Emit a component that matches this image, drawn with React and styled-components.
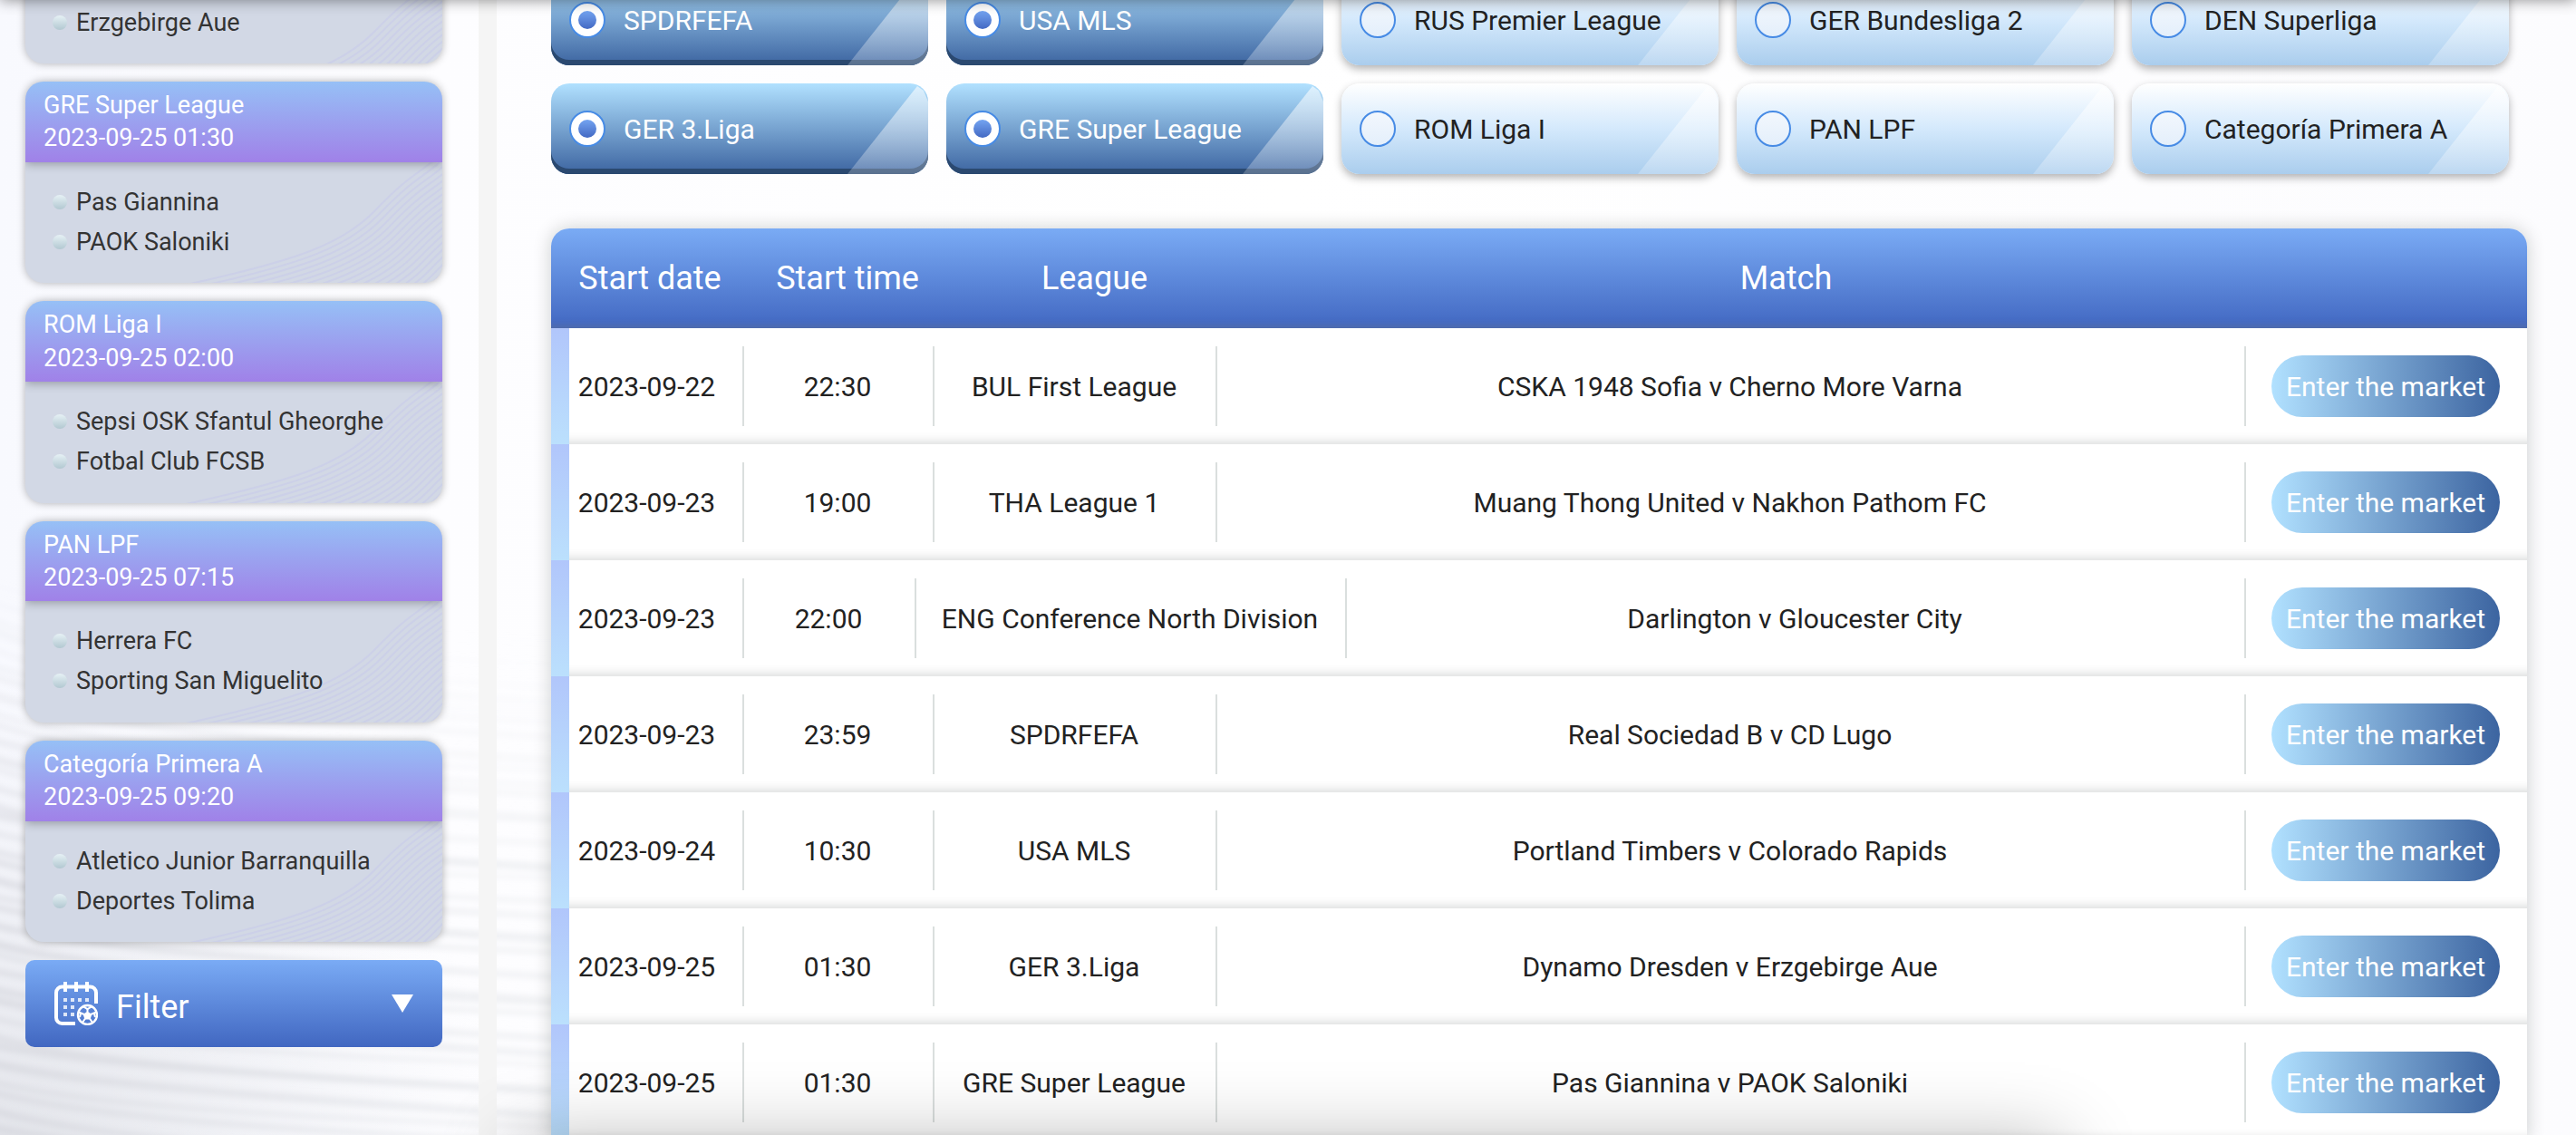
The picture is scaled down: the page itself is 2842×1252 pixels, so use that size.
import React from 'react'
import styled, { createGlobalStyle, css } from 'styled-components'

const GlobalStyle = createGlobalStyle`
  * {
    box-sizing: border-box;
  }

  body {
    margin: 0;
    font-family: Roboto, "Liberation Sans", sans-serif;
    color: #222;
    background: #fff;
    -webkit-font-smoothing: antialiased;
  }
`

const blueGradient = 'linear-gradient(180deg, #7aabf5 0%, #4167c1 100%)'

const Page = styled.div`
  position: relative;
  display: flex;
  align-items: stretch;
  height: 1252px;
  overflow: hidden;
`

const Backdrop = styled.svg`
  position: absolute;
  left: 0;
  top: 0;
  width: 2842px;
  height: 1252px;
`

const TopShade = styled.div`
  position: absolute;
  left: 0;
  right: 0;
  bottom: 100%;
  height: 40px;
  box-shadow: 0 0 16px rgba(0, 0, 0, .45);
`

const BottomShade = styled.div`
  position: absolute;
  left: 20%;
  top: calc(100% + 10px);
  width: 60%;
  height: 400px;
  box-shadow: 0 0 80px rgba(0, 0, 0, .3);
`

/* sidebar */

const Sidebar = styled.aside`
  position: relative;
  display: flex;
  flex-direction: column;
  gap: 20px;
  flex: none;
  width: 548px;
  margin-top: -19.5px;
  padding: 0 40px 0 28px;
  border-right: 20px solid #f5f5f5;
`

const Card = styled.section`
  flex: none;
  border-radius: ${props => props.continued ? '0 0 20px 20px' : '20px'};
  overflow: hidden;
  background: #d2d8e5;
  box-shadow: 0 0 10px rgba(0, 0, 0, .3);
`

const CardHeader = styled.header`
  position: relative;
  height: 88.8px;
  padding: 8px 20px;
  font-size: 27px;
  line-height: 36.4px;
  color: #fff;
  background: linear-gradient(180deg, #96c0f6 0%, #a081e8 100%);
  box-shadow: 0 2px 10px rgba(0, 0, 0, .3);
`

const CardBody = styled.div`
  display: grid;
  height: ${props => props.continued ? '89.5px' : '133.5px'};

  > * {
    grid-area: 1 / 1;
  }
`

const CardPattern = styled.svg`
  align-self: end;
  width: 460px;
  height: 134px;
`

const Teams = styled.ul`
  position: relative;
  margin: 0;
  padding: 22px 30px;
  list-style: none;
`

const Team = styled.li`
  display: flex;
  align-items: center;
  gap: 10px;
  height: 44px;
  font-size: 27px;
  line-height: 30px;
  color: #333;

  &::before {
    content: '';
    width: 16px;
    height: 16px;
    border-radius: 50%;
    background: linear-gradient(180deg, #e6f1f5 0%, #b2c8d1 100%);
  }
`

const FilterButton = styled.button`
  display: flex;
  align-items: center;
  flex: none;
  height: 96px;
  padding: 0 32px;
  border: 0;
  border-radius: 10px;
  font: 36px Roboto, sans-serif;
  color: #fff;
  background: ${blueGradient};
`

const FilterLabel = styled.span`
  flex: 1;
  padding: 7px 0 0 20px;
  text-align: left;
`

const Caret = styled.span`
  border: 12px solid transparent;
  border-top: 20px solid #fff;
  border-bottom: 0;
`

/* league picker */

const Main = styled.main`
  position: relative;
  display: flex;
  flex-direction: column;
  gap: 60px;
  flex: none;
  width: 2240px;
  margin-top: -28px;
  padding-left: 60px;
`

const Leagues = styled.div`
  display: grid;
  grid-template-columns: repeat(5, 416px);
  gap: 20px;
`

const League = styled.label`
  position: relative;
  display: flex;
  align-items: center;
  gap: 20px;
  height: 100px;
  padding: 0 20px;
  border-radius: 20px;
  overflow: hidden;
  font-size: 30px;
  color: #222;
  background: linear-gradient(180deg, #fff 0%, #d4e9fc 50%, #aacded 100%);
  box-shadow: 0 4px 10px rgba(0, 0, 0, .3);

  &::after {
    content: '';
    position: absolute;
    inset: 0;
    background: linear-gradient(180deg, rgba(255, 255, 255, .6), rgba(255, 255, 255, .22));
    clip-path: polygon(327px 100%, 404px 3px, 411px 8px, 100% 20px, 100% 100%);
  }

  ${props => props.selected && css`
    color: #fff;
    background: linear-gradient(180deg, #b1e1ff 0%, #3c64a0 100%);
    box-shadow: inset 0 -6px 0 #2b4970;
  `}
`

const Radio = styled.span`
  display: flex;
  align-items: center;
  justify-content: center;
  width: 40px;
  height: 40px;
  border: 2px solid #478be5;
  border-radius: 50%;
  background: linear-gradient(180deg, #f2f7fd, #e4effb);

  ${props => props.selected && css`
    background: #fff;

    &::before {
      content: '';
      width: 20px;
      height: 20px;
      border-radius: 50%;
      background: linear-gradient(180deg, #74a4f1, #4369c3);
    }
  `}
`

/* match table */

const Table = styled.div`
  border-radius: 20px 20px 0 0;
  background: #fff;
  box-shadow: 0 0 20px rgba(0, 20, 15, .2);
`

const TableHead = styled.div`
  display: grid;
  grid-template-columns: 10% 10% 15% 55% 10%;
  align-items: center;
  height: 110px;
  border-radius: 20px 20px 0 0;
  font-size: 36px;
  text-align: center;
  color: #fff;
  background: ${blueGradient};
  box-shadow: inset 0 -10px 8px -8px rgba(120, 120, 120, .4);
`

const Row = styled.div`
  display: grid;
  grid-template-columns: ${props => props.wide ? '213px 190px 475px' : '213px 210px 312px'} 1fr 310px;
  align-items: center;
  position: relative;
  height: 128px;
  font-size: 30px;
  box-shadow: inset 0 -14px 12px -12px rgba(0, 20, 15, .17);

  &::before {
    content: '';
    position: absolute;
    left: 0;
    top: 0;
    width: 20px;
    height: 100%;
    background: linear-gradient(180deg, #b1c6fb 0%, #bbe0fd 100%);
  }
`

const Cell = styled.div`
  display: flex;
  align-items: center;
  justify-content: center;
  height: 88px;
  padding-right: 2px;
  border-right: 2px solid #dadfde;
  white-space: nowrap;

  &:first-child {
    padding-right: 0;
  }
`

const ActionCell = styled(Cell)`
  border-right: 0;
`

const MarketButton = styled.button`
  width: 252px;
  height: 68px;
  padding: 0;
  border: 0;
  border-radius: 34px;
  font: 30px Roboto, sans-serif;
  color: #fff;
  background: linear-gradient(90deg, #b1e1ff 0%, #3c64a0 100%);
`

const fixtures = [
  { teams: ['Erzgebirge Aue'] },
  { league: 'GRE Super League', start: '2023-09-25 01:30', teams: ['Pas Giannina', 'PAOK Saloniki'] },
  { league: 'ROM Liga I', start: '2023-09-25 02:00', teams: ['Sepsi OSK Sfantul Gheorghe', 'Fotbal Club FCSB'] },
  { league: 'PAN LPF', start: '2023-09-25 07:15', teams: ['Herrera FC', 'Sporting San Miguelito'] },
  { league: 'Categoría Primera A', start: '2023-09-25 09:20', teams: ['Atletico Junior Barranquilla', 'Deportes Tolima'] },
]

const leagues = [
  { name: 'SPDRFEFA', selected: true },
  { name: 'USA MLS', selected: true },
  { name: 'RUS Premier League' },
  { name: 'GER Bundesliga 2' },
  { name: 'DEN Superliga' },
  { name: 'GER 3.Liga', selected: true },
  { name: 'GRE Super League', selected: true },
  { name: 'ROM Liga I' },
  { name: 'PAN LPF' },
  { name: 'Categoría Primera A' },
]

const matches = [
  { date: '2023-09-22', time: '22:30', league: 'BUL First League', match: 'CSKA 1948 Sofia v Cherno More Varna' },
  { date: '2023-09-23', time: '19:00', league: 'THA League 1', match: 'Muang Thong United v Nakhon Pathom FC' },
  { date: '2023-09-23', time: '22:00', league: 'ENG Conference North Division', match: 'Darlington v Gloucester City' },
  { date: '2023-09-23', time: '23:59', league: 'SPDRFEFA', match: 'Real Sociedad B v CD Lugo' },
  { date: '2023-09-24', time: '10:30', league: 'USA MLS', match: 'Portland Timbers v Colorado Rapids' },
  { date: '2023-09-25', time: '01:30', league: 'GER 3.Liga', match: 'Dynamo Dresden v Erzgebirge Aue' },
  { date: '2023-09-25', time: '01:30', league: 'GRE Super League', match: 'Pas Giannina v PAOK Saloniki' },
]

const range = n => Array.from({ length: n }, (_, i) => i)

// soft grey ripples, strongest in the lower left corner
const Waves = () => (
  <Backdrop viewBox="0 0 2842 1252">
    <defs>
      <linearGradient id="base" x1="0" y1="0" x2="1" y2="0">
        <stop offset="0" stopColor="#f8f9fe" />
        <stop offset=".17" stopColor="#fdfdff" />
        <stop offset=".5" stopColor="#ffffff" />
        <stop offset="1" stopColor="#fcfcfe" />
      </linearGradient>
      <radialGradient id="corner" gradientUnits="userSpaceOnUse" cx="0" cy="1300" r="560">
        <stop offset="0" stopColor="#d4d6dc" stopOpacity=".65" />
        <stop offset="1" stopColor="#e4e6ec" stopOpacity="0" />
      </radialGradient>
      <linearGradient id="ripple" gradientUnits="userSpaceOnUse" x1="0" y1="0" x2="640" y2="0">
        <stop offset="0" stopColor="#d4d5dc" stopOpacity=".8" />
        <stop offset=".6" stopColor="#dfe1e6" stopOpacity=".7" />
        <stop offset="1" stopColor="#e9ebee" stopOpacity=".6" />
      </linearGradient>
      <filter id="soft" x="-5%" y="-20%" width="110%" height="140%">
        <feGaussianBlur stdDeviation="3" />
      </filter>
    </defs>
    <rect width="2842" height="1252" fill="url(#base)" />
    <rect width="640" height="1252" fill="url(#corner)" />
    <g filter="url(#soft)" fill="none" stroke="url(#ripple)">
      {range(38).map(i => {
        const y = 640 + i * 17 + (i % 3) * 3
        const drop = 34 + (i % 5) * 3 + Math.max(0, 20 - i)
        return (
          <path
            key={i}
            d={`M-20 ${y} C 60 ${y + drop * .6}, 240 ${y + drop}, 640 ${y + drop + 14 + (i % 4) * 4}`}
            strokeWidth={4 + (i % 4) * 1.5}
            opacity={Math.min(.8, .08 + i * .035)}
          />
        )
      })}
    </g>
  </Backdrop>
)

const Stripes = () => (
  <CardPattern viewBox="0 0 460 134">
    <g fill="none" stroke="#c8cbea" strokeWidth="2" opacity=".6">
      {range(24).map(i => (
        <path
          key={i}
          d="M140 143 L182 134 C300 108 350 90 385 54 S425 18 448 0 L500 -44"
          transform={`translate(${i * 4} ${i * 4.4})`}
        />
      ))}
    </g>
  </CardPattern>
)

const CalendarIcon = () => (
  <svg width="48" height="48" viewBox="0 0 48 48" fill="none" stroke="#fff">
    <path d="M23 46H8.500A6.500 6.500 0 0 1 2 39.500V12a6.500 6.500 0 0 1 6.500-6.500h31A6.500 6.500 0 0 1 46 12v12" strokeWidth="4" />
    <path d="M12 0v11M24 0v11M36 0v11" strokeWidth="4" />
    <path d="M10 20h4M18 20h4M26 20h4M34 20h4M10 28h4M18 28h4M10 36h4M18 36h4" strokeWidth="4" opacity=".8" />
    <circle cx="36.500" cy="36.500" r="10.500" strokeWidth="2.400" />
    <path d="M36.500 32.500l4.800 3.500-1.800 5.600h-6l-1.800-5.600z" fill="#fff" stroke="none" />
    <path d="M36.500 33v-3M40 36l5-2M39 40.500l3 4.500M34 40.500l-3 4.500M33 36l-5-2" strokeWidth="2" />
    <path d="M32 27.500l4.500 2.500 4.500-2.500M46 33l-2 2 1 4M27 33l2 2-1 4" strokeWidth="2" />
  </svg>
)

const FixtureCard = ({ league, start, teams }) => (
  <Card continued={!league}>
    {league && (
      <CardHeader>
        <div>{league}</div>
        <div>{start}</div>
      </CardHeader>
    )}
    <CardBody continued={!league}>
      <Stripes />
      <Teams>
        {teams.map(team => <Team key={team}>{team}</Team>)}
      </Teams>
    </CardBody>
  </Card>
)

const App = () => (
  <Page>
    <GlobalStyle />
    <Waves />
    <Sidebar>
      {fixtures.map(fixture => <FixtureCard key={fixture.teams[0]} {...fixture} />)}
      <FilterButton>
        <CalendarIcon />
        <FilterLabel>Filter</FilterLabel>
        <Caret />
      </FilterButton>
    </Sidebar>
    <Main>
      <Leagues>
        {leagues.map(({ name, selected }) => (
          <League key={name} selected={selected}>
            <Radio selected={selected} />
            {name}
          </League>
        ))}
      </Leagues>
      <Table>
        <TableHead>
          <div>Start date</div>
          <div>Start time</div>
          <div>League</div>
          <div>Match</div>
        </TableHead>
        {matches.map(({ date, time, league, match }) => (
          <Row key={match} wide={league.length > 20}>
            <Cell>{date}</Cell>
            <Cell>{time}</Cell>
            <Cell>{league}</Cell>
            <Cell>{match}</Cell>
            <ActionCell>
              <MarketButton>Enter the market</MarketButton>
            </ActionCell>
          </Row>
        ))}
      </Table>
    </Main>
    <TopShade />
    <BottomShade />
  </Page>
)

export default App
